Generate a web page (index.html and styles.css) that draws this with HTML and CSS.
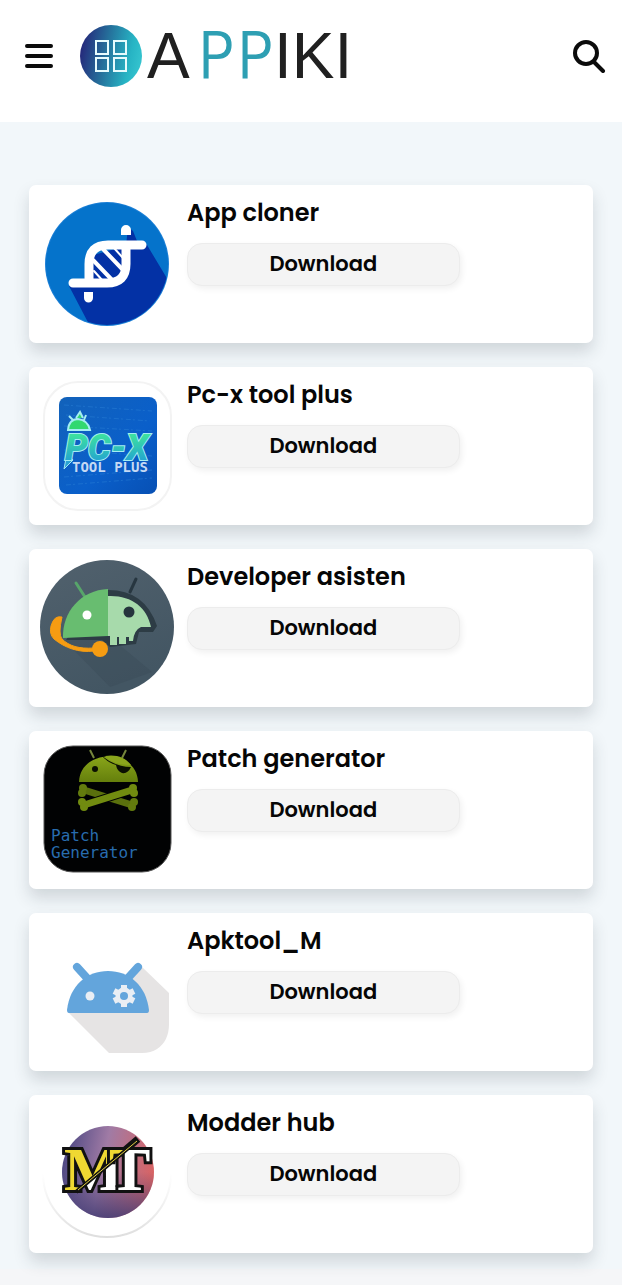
FILE: index.html
```
<!DOCTYPE html>
<html lang="en">
<head>
    <meta charset="utf-8">
    <meta name="viewport" content="width=device-width, initial-scale=1">
    <title>Appiki</title>
    <link rel="stylesheet" href="styles.css">
</head>
<body>

    <header class="topbar">
        <button class="icon-btn" type="button" aria-label="Menu">
            <svg width="28" height="26" viewBox="0 0 28 26"><path d="M2 3H26M2 13H26M2 23H26" stroke="#0b0b0b" stroke-width="4" stroke-linecap="round"/></svg>
        </button>
        <a class="logo" href="#" aria-label="Appiki">
            <svg width="280" height="88" viewBox="0 -12 280 88">
                <defs>
                    <linearGradient id="lg" x1="0" y1="0.4" x2="1" y2="0.6">
                        <stop offset="0" stop-color="#25277a"/><stop offset="0.4" stop-color="#25709b"/><stop offset="0.8" stop-color="#27b4c4"/><stop offset="1" stop-color="#35c4cf"/>
                    </linearGradient>
                </defs>
                <circle cx="31" cy="32" r="31" fill="url(#lg)"/>
                <g fill="none" stroke="#e6fbfd" stroke-width="2">
                    <rect x="16" y="17" width="12" height="13"/><rect x="34" y="17" width="12" height="13"/>
                    <rect x="16" y="34" width="12" height="13"/><rect x="34" y="34" width="12" height="13"/>
                </g>
                <text class="logo-dark" x="67" y="54">A</text>
                <text class="logo-teal" x="117 156" y="54">PP</text>
                <text class="logo-dark" x="194" y="54">IKI</text>
            </svg>
        </a>
        <button class="icon-btn search" type="button" aria-label="Search">
            <svg width="34" height="34" viewBox="0 0 34 34" fill="none" stroke="#0b0b0b" stroke-linecap="round"><circle cx="14" cy="14" r="11" stroke-width="4"/><path d="M22 23L31 32" stroke-width="4"/></svg>
        </button>
    </header>

    <main class="list">

        <article class="card">
            <svg class="thumb" viewBox="0 0 134 134">
                <clipPath id="c1"><circle cx="67" cy="68" r="61"/></clipPath>
                <circle cx="67" cy="68" r="62" fill="#1c7fd6"/>
                <g clip-path="url(#c1)">
                    <rect width="134" height="134" fill="#0573cb"/>
                    <path d="M88 31L93 35L97 45L107 49L134 94V134H52L29 90L50 80V60L86 50Z" fill="#0331a5"/>
                </g>
                <g fill="none" stroke="#fff" stroke-width="9" stroke-linecap="round">
                    <path d="M49 86V68Q49 49 68 49H102"/>
                    <path d="M86 50V68Q86 87 67 87H33"/>
                    <path d="M53 64L74 86M62 52L84 75" stroke-width="4"/>
                    <path d="M54 75L63 85M74 52L83 62" stroke-width="2"/>
                </g>
                <path d="M81 39V34a5 5 0 0 1 10 0V39ZM44 96H53V102a4.500 4.500 0 0 1-9 0Z" fill="#fff"/>
            </svg>
            <div class="info">
                <h2>App cloner</h2>
                <button class="download" type="button">Download</button>
            </div>
        </article>

        <article class="card">
            <svg class="thumb" viewBox="0 0 134 134">
                <defs>
                    <linearGradient id="px" x1="0" y1="0" x2="0" y2="1"><stop offset="0.2" stop-color="#3ce0a0"/><stop offset="0.8" stop-color="#24a5cf"/></linearGradient>
                    <linearGradient id="pb" x1="0" y1="0" x2="1" y2="1"><stop offset="0" stop-color="#1262ba"/><stop offset="0.6" stop-color="#0a5fca"/><stop offset="1" stop-color="#0750b4"/></linearGradient>
                </defs>
                <rect x="4" y="4" width="127" height="128" rx="34" fill="#fff" stroke="#f3f3f3" stroke-width="2"/>
                <rect x="19" y="19" width="98" height="97" rx="8" fill="url(#pb)"/>
                <path d="M24 27L112 33M26 37L110 43M24 48L112 53M24 72L112 78M24 99L112 92M26 107L112 100" stroke="#2a80d5" stroke-dasharray="5 2 2 3" fill="none" opacity=".5"/>
                <path d="M28 52Q29 41 38 41Q48 42 50 52ZM33 42L29 38M44 42L46 37M36 40L40 34L43 40" fill="#31d86f" stroke="#a4edf2" stroke-width="2"/>
                <path d="M27 75L24 91L33 82Z" fill="#2ba4d3" stroke="#a4e8f2"/>
                <text class="pcx" x="25" y="82">PC-X</text>
                <text class="tool-plus" x="32" y="94">TOOL PLUS</text>
            </svg>
            <div class="info">
                <h2>Pc-x tool plus</h2>
                <button class="download" type="button">Download</button>
            </div>
        </article>

        <article class="card">
            <svg class="thumb" viewBox="0 0 134 134">
                <clipPath id="c3"><circle cx="67" cy="67" r="66"/></clipPath>
                <linearGradient id="dv" x1="0" y1="0" x2="0.4" y2="1"><stop offset="0" stop-color="#51616d"/><stop offset="1" stop-color="#435663"/></linearGradient>
                <circle cx="67" cy="67" r="67" fill="url(#dv)"/>
                <path d="M24 80L70 127L112 112L70 77Z" fill="#34454f" opacity=".25" clip-path="url(#c3)"/>
                <path d="M68 30Q105 30 117 66L113 72L99 72L96 84L70 87L62 80L26 80L36 65Z" fill="#2d3c45"/>
                <path d="M36 23L45 37" stroke="#57a56a" stroke-width="3" stroke-linecap="round"/>
                <path d="M96 19L90 32" stroke="#273640" stroke-width="3" stroke-linecap="round"/>
                <path d="M68 29V76L23 78C22 52 41 30 68 29Z" fill="#68bd70"/>
                <path d="M68 36C91 35 107 47 111 67L101 67Q94 70 93 81H89V77H86V84H79V77H77V85H73V85H70V76H68Z" fill="#a7daab"/>
                <circle cx="47" cy="55" r="4.500" fill="#fff"/>
                <circle cx="89" cy="52" r="5.500" fill="#26343d"/>
                <path d="M22 57Q14 55 11 66Q9 74 14 79C25 88 39 93 54 91V88C39 89 29 86 22 79Q18 74 22 57Z" fill="#f69c12" stroke="#f69c12"/>
                <circle cx="60" cy="89" r="8" fill="#f69c12"/>
            </svg>
            <div class="info">
                <h2>Developer asisten</h2>
                <button class="download" type="button">Download</button>
            </div>
        </article>

        <article class="card">
            <svg class="thumb" viewBox="0 0 134 134">
                <linearGradient id="pg" x1="0" y1="0" x2="0" y2="1"><stop offset="0" stop-color="#89a51a"/><stop offset="1" stop-color="#657f0c"/></linearGradient>
                <rect x="4" y="4" width="127" height="126" rx="29" fill="#010203" stroke="#555"/>
                <path d="M50 8L54 16M86 8L82 16" stroke="#75863c" stroke-width="2"/>
                <path d="M39 40C40 6 97 6 98 40Z" fill="url(#pg)"/>
                <path d="M62 14Q76 25 91 25Q88 32 82 31Q77 29 76 23Q67 20 62 14Z" fill="#0b1002"/>
                <path d="M65 14C77 12 86 16 91 23Q76 24 65 14Z" fill="#8ba51d"/>
                <circle cx="55" cy="27" r="3" fill="#0b1002"/>
                <g fill="#637b0e">
                    <path d="M44 48L92 63" stroke="#5a700d" stroke-width="7"/>
                    <circle cx="43" cy="46" r="4"/><circle cx="42" cy="51" r="4"/><circle cx="94" cy="60" r="4"/><circle cx="92" cy="65" r="4"/>
                    <path d="M88 49L48 62" stroke="#010203" stroke-width="9"/>
                    <path d="M92 48L44 63" stroke="#718b10" stroke-width="7"/>
                </g>
                <g fill="#718b10"><circle cx="93" cy="46" r="4"/><circle cx="94" cy="51" r="4"/><circle cx="42" cy="60" r="4"/><circle cx="44" cy="65" r="4"/></g>
                <text class="patch" x="11" y="99">Patch</text>
                <text class="patch" x="11" y="116">Generator</text>
            </svg>
            <div class="info">
                <h2>Patch generator</h2>
                <button class="download" type="button">Download</button>
            </div>
        </article>

        <article class="card">
            <svg class="thumb" viewBox="0 0 134 134">
                <path d="M102 43L129 69V100Q129 117 117 125Q111 129 102 129H69L28 88L90 58Z" fill="#e6e4e4"/>
                <path d="M37 43L47 54M98 43L88 54" stroke="#63a5dc" stroke-width="8" stroke-linecap="round"/>
                <path d="M29 89Q27 89 27 86C30 61 47 47 68 47S106 61 109 86Q109 89 107 89Z" fill="#63a5dc"/>
                <circle cx="50" cy="72" r="4.500" fill="#e9eef4"/>
                <g stroke="#e9eef4" fill="none">
                    <path d="M84 61V83M74 67L94 77M74 77L94 67" stroke-width="6"/>
                    <circle cx="84" cy="72" r="6" stroke-width="5"/>
                </g>
                <circle cx="84" cy="72" r="4" fill="#63a5dc"/>
            </svg>
            <div class="info">
                <h2>Apktool_M</h2>
                <button class="download" type="button">Download</button>
            </div>
        </article>

        <article class="card">
            <svg class="thumb" viewBox="0 0 134 134">
                <defs>
                    <linearGradient id="mb" x1="0" y1="0.3" x2="1" y2="0.5"><stop offset="0" stop-color="#4b4682"/><stop offset="0.45" stop-color="#a07ba5"/><stop offset="1" stop-color="#d96363"/></linearGradient>
                    <linearGradient id="ms" x1="0" y1="0" x2="0" y2="1"><stop offset="0.5" stop-color="#403b73" stop-opacity="0"/><stop offset="1" stop-color="#403b73" stop-opacity=".85"/></linearGradient>
                    <linearGradient id="mt" gradientUnits="userSpaceOnUse" x1="43" y1="33" x2="90" y2="87"><stop offset="0.5" stop-color="#efd832"/><stop offset="0.5" stop-color="#fff"/></linearGradient>
                    <linearGradient id="mr" x1="0" y1="0" x2="0" y2="1"><stop offset="0.5" stop-color="#e6e6e6" stop-opacity="0"/><stop offset="1" stop-color="#dedede"/></linearGradient>
                </defs>
                <circle cx="67" cy="67" r="64" fill="#fff" stroke="url(#mr)" stroke-width="2"/>
                <circle cx="68" cy="66" r="46" fill="url(#mb)"/>
                <circle cx="68" cy="66" r="46" fill="url(#ms)"/>
                <path d="M84 45L98 33" stroke="#111" stroke-width="7"/>
                <text class="mt" x="24 69" y="84">MT</text>
                <path d="M36 86L98 34" stroke="#111" stroke-width="4"/>
                <path d="M38 84L97 35" stroke="#e4cf42"/>
            </svg>
            <div class="info">
                <h2>Modder hub</h2>
                <button class="download" type="button">Download</button>
            </div>
        </article>

    </main>

    <footer class="bottom"></footer>

</body>
</html>
```
FILE: styles.css
```
* { box-sizing: border-box; }
body {
    margin: 0;
    background: #f2f7fa;
    color: #060606;
    font-family: Poppins, Inter, sans-serif;
}

/* Header */
.topbar {
    display: flex;
    align-items: center;
    height: 122px;
    padding: 0 16px 10px 25px;
    background: #fff;
}
.icon-btn { display: flex; padding: 0; border: 0; background: none; cursor: pointer; }
.search { margin-left: auto; }
.logo { display: flex; margin-left: 27px; }
.logo-dark { font: 64px "Liberation Sans", sans-serif; fill: #202020; }
.logo-teal { font: 200 62px "DejaVu Sans", sans-serif; fill: #2e9fb3; stroke: #2e9fb3; stroke-width: 2px; }

/* App cards */
.list {
    display: flex;
    flex-direction: column;
    gap: 24px;
    padding: 63px 29px 16px;
}
.card {
    display: flex;
    gap: 13px;
    height: 158px;
    padding: 11px;
    border-radius: 7px;
    background: #fff;
    box-shadow: 0 9px 16px rgba(40, 55, 65, 0.17);
}
.thumb { flex: none; width: 134px; height: 134px; }
.info { flex: 1; min-width: 0; }
.info h2 { margin: 0 0 14px; font-size: 24px; font-weight: 600; line-height: 33px; }
.download {
    display: block;
    width: 69%;
    height: 43px;
    padding: 0 0 2px;
    border: 1px solid #ececec;
    border-radius: 15px;
    background: #f4f4f4;
    box-shadow: 2px 3px 6px rgba(0, 0, 0, 0.06);
    color: inherit;
    font: 600 21px/38px Poppins, Inter, sans-serif;
    cursor: pointer;
}

/* Lettering inside the thumbs */
.pcx { font: italic 900 36px Roboto, sans-serif; fill: url(#px); stroke: #a4edf2; stroke-width: 2px; paint-order: stroke; }
.tool-plus { font: bold 14px "DejaVu Sans Mono", monospace; fill: #c5d9f4; }
.patch { font: 16px "DejaVu Sans Mono", monospace; fill: #286cae; }
.mt { font: bold 62px "Liberation Serif", serif; fill: url(#mt); stroke: #111; stroke-width: 6px; paint-order: stroke; }

.bottom { height: 16px; background: #f5f6f8; }
```
